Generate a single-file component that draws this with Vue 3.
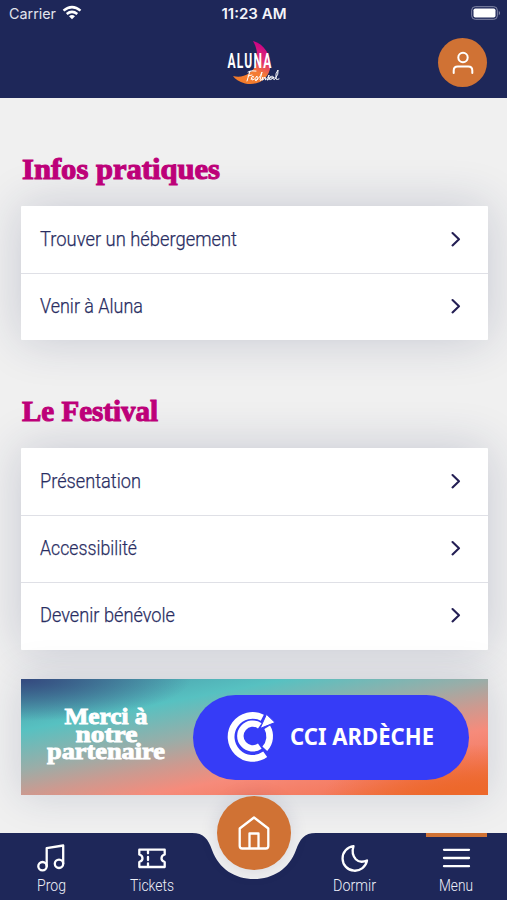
<script setup>
const sections = [
  {
    title: 'Infos pratiques',
    width: 198,
    items: [
      { label: 'Trouver un hébergement', width: 197 },
      { label: 'Venir à Aluna', width: 103 },
    ],
  },
  {
    title: 'Le Festival',
    width: 136,
    items: [
      { label: 'Présentation', width: 101 },
      { label: 'Accessibilité', width: 97 },
      { label: 'Devenir bénévole', width: 135 },
    ],
  },
]
const tabs = [
  { id: 'prog', label: 'Prog', width: 29 },
  { id: 'tickets', label: 'Tickets', width: 44 },
  { id: 'home' },
  { id: 'sleep', label: 'Dormir', width: 43 },
  { id: 'menu', label: 'Menu', width: 34, active: true },
]
</script>

<template>
  <div class="screen">
    <header class="header">
      <div class="status">
        <div class="carrier">
          <svg width="48" height="20"><text x="0" y="14.500" textLength="47" lengthAdjust="spacingAndGlyphs" class="status-text">Carrier</text></svg>
          <svg class="wifi" width="20" height="16" viewBox="0 0 20 16" fill="none" stroke="#fff" stroke-width="2.500">
            <path d="M1.500 5.600Q10-1.400 18.500 5.600M4.700 9Q10 4.800 15.300 9" />
            <path d="M7 11.300Q10 8.900 13 11.300L10 14.300Z" fill="#fff" stroke="none" />
          </svg>
        </div>
        <svg width="68" height="20"><text x="0.500" y="14.500" textLength="65" lengthAdjust="spacingAndGlyphs" class="status-text clock">11:23 AM</text></svg>
        <div class="battery-box">
          <svg width="30" height="15" viewBox="0 0 30 15">
            <rect x=".7" y=".7" width="25.600" height="12.600" rx="3.500" fill="none" stroke="#858aa9" />
            <rect x="2.500" y="2.500" width="22" height="9" rx="1.800" fill="#fff" />
            <path d="M27.800 4.700q2.500 2.300 0 4.600z" fill="#858aa9" />
          </svg>
        </div>
      </div>
      <div class="brand-row">
        <svg class="logo" width="56" height="48" viewBox="0 0 56 48">
          <defs>
            <linearGradient id="moon" x1=".65" y1="0" x2=".3" y2="1">
              <stop offset="0" stop-color="#c90087" />
              <stop offset=".38" stop-color="#e12e72" />
              <stop offset=".65" stop-color="#f47c35" />
              <stop offset="1" stop-color="#f37b29" />
            </linearGradient>
          </defs>
          <path d="M27 2C38 5 45 16 44.500 27C43 41 31 47 19 44.500C13 43 9 40 7 37C18 40 29 33 31 22C32 14 30 7 27 2Z" fill="url(#moon)" />
          <text x="1.500" y="29" textLength="45" lengthAdjust="spacingAndGlyphs" class="logo-name">ALUNA</text>
          <g class="script-mark" fill="none" stroke="#fff" stroke-linecap="round">
            <path d="M22 33q4-2 8-1M24 32l-3 10M22 37l4-1" />
            <path d="M25 40q4-2 2-3q-3 1-1 4q3 0 5-4q0 3 1 3q-2 3-3 1q4 0 7-8l-2 8q1 2 3-3l-1 3q1 1 3-3q1 3 0 3q3-1 4-5q0 4-2 5q1 1 3-3q4-2 3 1q-4-1-4 1q1 2 5-2q-1 4 1 2q4-5 3-9q-3 3-2 9q1 1 3 0" />
          </g>
        </svg>
        <button class="profile" aria-label="Profil">
          <svg width="22" height="24" viewBox="0 0 22 24" fill="none" stroke="#fff" stroke-width="2" stroke-linecap="round">
            <circle cx="11" cy="6.500" r="4.700" />
            <path d="M1.700 22v-2.500q0-4 4-4h10.600q4 0 4 4V22" />
          </svg>
        </button>
      </div>
    </header>

    <main class="content">
      <section v-for="section in sections" :key="section.title" class="section">
        <h2 class="heading">
          <svg width="220" height="38"><text x="1" y="26" :textLength="section.width" lengthAdjust="spacingAndGlyphs" class="display">{{ section.title }}</text></svg>
        </h2>
        <div class="card">
          <div v-for="item in section.items" :key="item.label" class="row">
            <svg width="240" height="34"><text x="0" y="23.500" :textLength="item.width" lengthAdjust="spacingAndGlyphs" class="row-label">{{ item.label }}</text></svg>
            <svg width="10" height="16" viewBox="0 0 10 16" fill="none" stroke="#241f54" stroke-width="2.100" stroke-linecap="round" stroke-linejoin="round"><path d="M1.500 2L8 8.200L1.500 14.400" /></svg>
          </div>
        </div>
      </section>

      <div class="banner">
        <svg class="thanks" width="122" height="66" viewBox="0 0 122 66">
          <text x="18.500" y="21" textLength="83" lengthAdjust="spacingAndGlyphs" class="thanks-text">Merci à</text>
          <text x="29.500" y="38.500" textLength="62" lengthAdjust="spacingAndGlyphs" class="thanks-text">notre</text>
          <text x="1" y="55.500" textLength="118" lengthAdjust="spacingAndGlyphs" class="thanks-text">partenaire</text>
        </svg>
        <div class="partner">
          <svg width="56" height="60" viewBox="0 0 56 60" fill="none" stroke="#fff">
            <path d="M39.300 11.700A21.500 21.500 0 1 0 42.200 48.300" stroke-width="6.800" />
            <path d="M36.800 19.800A12.400 12.400 0 1 0 36.800 40.200" stroke-width="6.400" />
            <path d="M44.200 21.300A17.800 17.800 0 0 1 41.800 42.700" stroke-width="6.600" />
            <path d="M37 22.500L43.500 8.300L52 16.500Z" fill="#fff" stroke="#363cf7" stroke-width="1" />
          </svg>
          <svg width="150" height="40"><text x="1" y="28.500" textLength="144" lengthAdjust="spacingAndGlyphs" class="partner-name">CCI ARDÈCHE</text></svg>
        </div>
      </div>
    </main>

    <nav class="nav">
      <svg class="nav-shape" width="507" height="67" viewBox="0 0 507 67">
        <path d="M0 0H192C204 0 208 6 212 17C219 36 235 46 254 46C273 46 289 36 296 17C300 6 304 0 316 0H507V67H0Z" fill="#1e2759" />
      </svg>
      <div v-for="tab in tabs" :key="tab.id" class="tab" :class="{ active: tab.active }">
        <button v-if="tab.id === 'home'" class="home" aria-label="Accueil">
          <svg width="34" height="36" viewBox="0 0 34 36" fill="none" stroke="#fff" stroke-width="2.300" stroke-linejoin="round">
            <path d="M2.700 13.500L17 2.500L31.300 13.500V31q0 2.500-2.500 2.500H5.200q-2.500 0-2.500-2.500Z" />
            <path d="M12.500 33.500V18.500h9v15" />
          </svg>
        </button>
        <template v-else>
          <svg class="tab-part" width="30" height="30" viewBox="0 0 30 30" fill="none" stroke="#fff" stroke-width="2.300" stroke-linecap="round" stroke-linejoin="round">
            <g v-if="tab.id === 'prog'">
              <circle cx="6.500" cy="23.200" r="4.200" /><circle cx="23" cy="20.800" r="4.200" />
              <path d="M10.700 23V5.200L27.200 2.500V20.500" />
            </g>
            <g v-else-if="tab.id === 'tickets'">
              <path d="M2.300 6.700H27.700V11.500Q24.500 12.500 24.500 15.200T27.700 19V24H2.300V19Q5.500 17.900 5.500 15.200T2.300 11.500Z" />
              <path d="M11 7.500v2.800M11 14v3M11 20.500v2.800" />
            </g>
            <path v-else-if="tab.id === 'sleep'" d="M13.500 3.200A12.300 12.300 0 1 0 27 17.500Q20 20.500 15.800 16.200Q11 11 13.500 3.200Z" />
            <path v-else d="M3 6.800H28M3 15H28M3 23.200H28" />
          </svg>
          <svg class="tab-part" :width="tab.width + 6" height="24"><text x="3" y="17.500" :textLength="tab.width" lengthAdjust="spacingAndGlyphs" class="tab-label">{{ tab.label }}</text></svg>
        </template>
      </div>
    </nav>
  </div>
</template>

<style>
body {
  margin: 0;
  overflow: hidden;
}
</style>

<style scoped>
* { box-sizing: border-box; }
svg { display: block; flex: none; overflow: visible; }
button { border: 0; padding: 0; color: #fff; }
.screen {
  width: 507px;
  height: 900px;
  display: flex;
  flex-direction: column;
  background: #f0f0f0;
  font-family: Roboto, "Liberation Sans", sans-serif;
  overflow: hidden;
}
.header {
  height: 98px;
  flex: none;
  background: #1e2759;
  position: relative;
  z-index: 1;
}
.status {
  height: 28px;
  display: grid;
  grid-template-columns: 1fr 68px 1fr;
  padding: 4px 6px 0 9px;
}
.status-text { font: 400 14.500px Inter, sans-serif; fill: #e2e4ed; }
.status-text.clock { font-weight: 600; fill: #f4f5fa; }
.carrier { display: flex; gap: 5px; }
.wifi { margin-top: 1px; }
.battery-box { display: flex; justify-content: flex-end; padding-top: 2px; }
.brand-row {
  display: grid;
  grid-template-columns: 1fr 56px 1fr;
  align-items: start;
  padding: 10px 20px 0 20px;
}
.logo { margin-top: 1px; grid-column: 2; }
.logo-name {
  font: 700 20px Roboto, sans-serif;
  letter-spacing: 2px;
  fill: #fff;
}
.script-mark { stroke-width: 1; }
.profile {
  grid-column: 3;
  justify-self: end;
  width: 49px;
  height: 49px;
  border-radius: 50%;
  background: #d07234;
  display: grid;
  place-items: center;
}
.content { padding: 55px 19.500px 0 20.500px; height: 735px; flex: none; }
.section { margin-bottom: 54.600px; }
.section:nth-child(2) { margin-bottom: 29.500px; }
.heading { margin: 0; height: 53px; position: relative; z-index: 1; }
.display {
  font: 700 30px "Liberation Serif", serif;
  fill: #bd0079;
  stroke: #bd0079;
  stroke-width: 1.100px;
}
.card {
  background: #fff;
  box-shadow: 0 0 48px rgba(30, 39, 89, .2);
  border-radius: 1px;
}
.row {
  height: 67.200px;
  display: flex;
  align-items: center;
  justify-content: space-between;
  padding: 0 27px 1.500px 19.500px;
}
.row + .row { border-top: 1px solid #dfe0e6; padding-bottom: 3px; }
.row-label { font: 300 21px Roboto, sans-serif; fill: #292d62; stroke: #292d62; stroke-width: .25px; }
.banner {
  height: 116px;
  display: flex;
  align-items: center;
  padding: 0 18px 0 25.500px;
  gap: 25px;
  background:
    radial-gradient(ellipse 150px 60px at 96% 108%, #ed682b 25%, rgba(237, 104, 43, 0) 100%),
    radial-gradient(ellipse 170px 42px at 0 0, #354c80 5%, rgba(53, 76, 128, 0) 100%),
    linear-gradient(169deg, #4a9caa 5%, #57c1c1 25%, #9aada8 44%, #cc9a90 56%, #f68b7b 68%, #f47b60 84%, #ed682b 100%);
  box-shadow: 0 0 40px rgba(30, 39, 89, .17);
}
.thanks { margin-bottom: 3px; }
.thanks-text { font: 700 24px "Liberation Serif", serif; fill: #fff; stroke: #fff; stroke-width: .9px; }
.partner {
  width: 276px;
  height: 85px;
  border-radius: 43px;
  background: #363cf7;
  display: flex;
  align-items: center;
  gap: 10.500px;
  padding: 0 0 2px 29.500px;
}
.partner-name { font: 700 24px "Noto Sans", sans-serif; fill: #fff; }
.nav {
  height: 67px;
  flex: none;
  display: grid;
  grid-template-columns: repeat(5, 101.200px);
  padding-left: 1px;
  position: relative;
  z-index: 2;
}
.nav-shape { position: absolute; left: 0; top: 0; }
.tab {
  position: relative;
  display: flex;
  flex-direction: column;
  align-items: center;
  padding-top: 10px;
}
.tab-part { margin-right: 1px; }
.tab.active::before {
  content: "";
  position: absolute;
  top: -.5px;
  width: 61px;
  height: 4px;
  background: #d07234;
}
.tab-label { font: 300 17px Roboto, sans-serif; fill: #eef0f8; }
.home {
  position: absolute;
  top: -37px;
  width: 74px;
  height: 74px;
  border-radius: 50%;
  background: #d07234;
  box-shadow: 0 0 18px rgba(30, 39, 89, .13);
  display: grid;
  place-items: center;
}
</style>
